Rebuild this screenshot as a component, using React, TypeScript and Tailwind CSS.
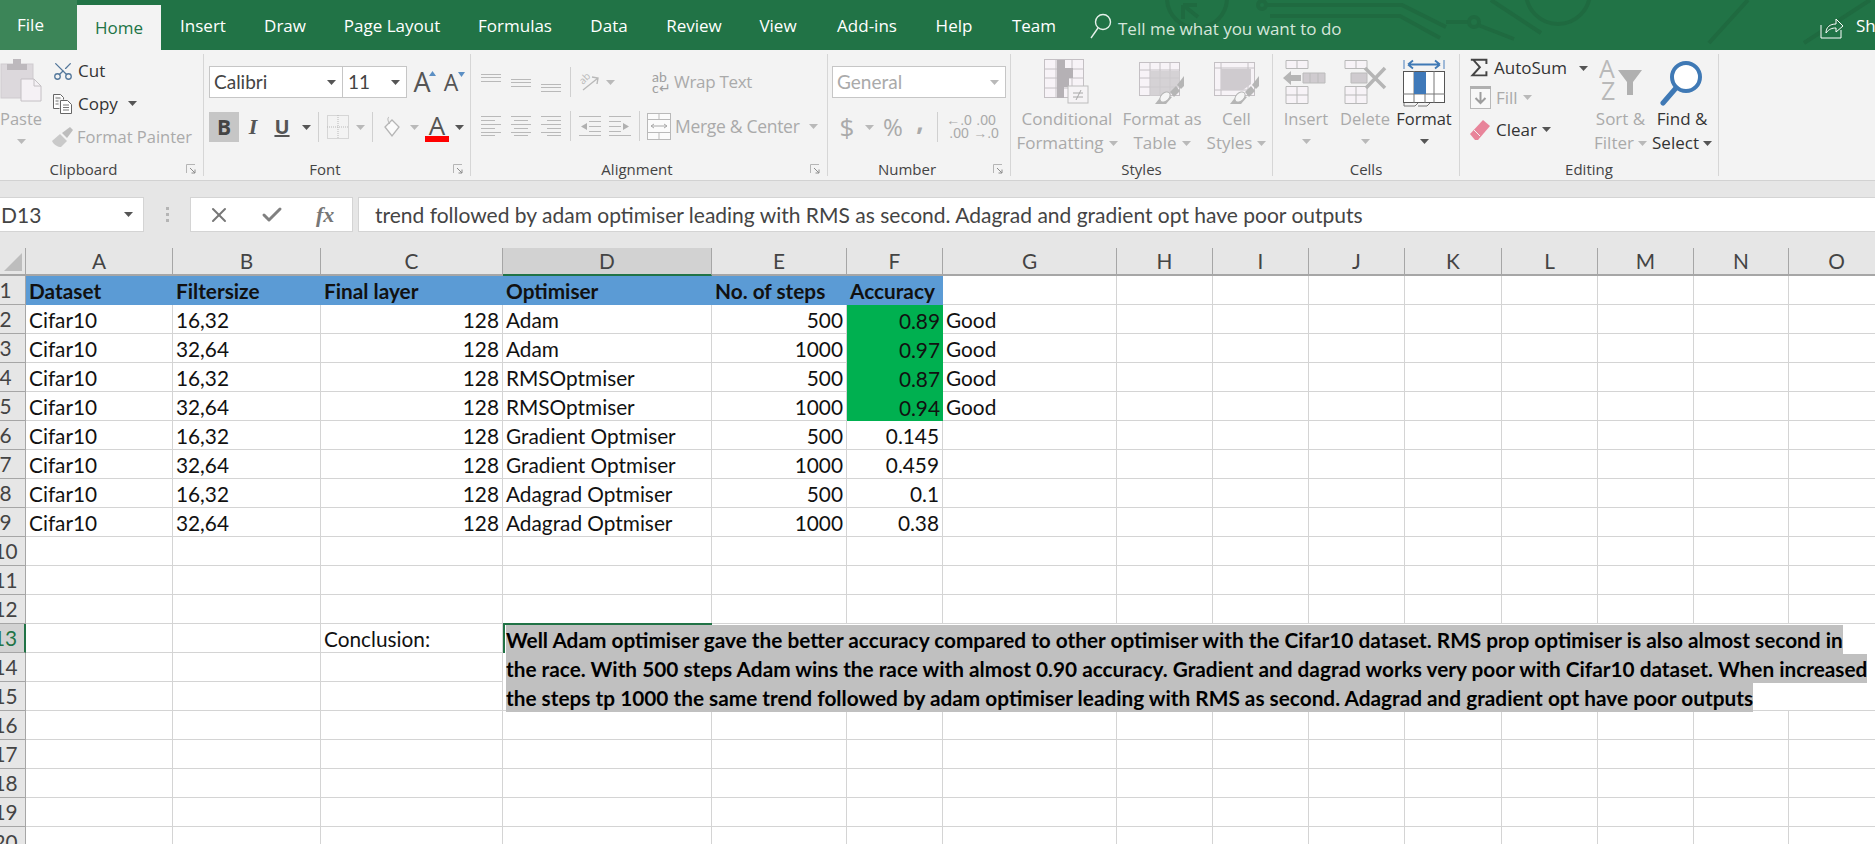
import { Check, Scissors, X } from "lucide-react";

const tabs = [
  { label: "Insert", w: "w-[84px]" },
  { label: "Draw", w: "w-[80px]" },
  { label: "Page Layout", w: "w-[134px]" },
  { label: "Formulas", w: "w-[112px]" },
  { label: "Data", w: "w-[76px]" },
  { label: "Review", w: "w-[94px]" },
  { label: "View", w: "w-[74px]" },
  { label: "Add-ins", w: "w-[104px]" },
  { label: "Help", w: "w-[70px]" },
  { label: "Team", w: "w-[90px]" },
];

const columns = ["A", "B", "C", "D", "E", "F", "G", "H", "I", "J", "K", "L", "M", "N", "O", "P"];

const rows = [
  ["Cifar10", "16,32", "128", "Adam", "500", "0.89", "Good"],
  ["Cifar10", "32,64", "128", "Adam", "1000", "0.97", "Good"],
  ["Cifar10", "16,32", "128", "RMSOptmiser", "500", "0.87", "Good"],
  ["Cifar10", "32,64", "128", "RMSOptmiser", "1000", "0.94", "Good"],
  ["Cifar10", "16,32", "128", "Gradient Optmiser", "500", "0.145", ""],
  ["Cifar10", "32,64", "128", "Gradient Optmiser", "1000", "0.459", ""],
  ["Cifar10", "16,32", "128", "Adagrad Optmiser", "500", "0.1", ""],
  ["Cifar10", "32,64", "128", "Adagrad Optmiser", "1000", "0.38", ""],
];

const headers = ["Dataset", "Filtersize", "Final layer", "Optimiser", "No. of steps", "Accuracy"];

const conclusion = [
  "Well Adam optimiser gave the better accuracy compared to other optimiser with the Cifar10 dataset. RMS prop optimiser is also almost second in",
  "the race. With 500 steps Adam wins the race with almost 0.90 accuracy. Gradient and dagrad works very poor with Cifar10 dataset. When increased",
  "the steps tp 1000 the same trend followed by adam optimiser leading with RMS as second. Adagrad and gradient opt have poor outputs",
];

const cellLine = "border-r border-b border-[#d4d4d4]";

function Caret({ dark = false }: { dark?: boolean }) {
  return (
    <svg width="9" height="5" viewBox="0 0 9 5" className="shrink-0">
      <path d="M0 0h9L4.5 5z" fill={dark ? "#555555" : "#b9b9b9"} />
    </svg>
  );
}

function Divider({ h = "h-[30px]" }: { h?: string }) {
  return <div className={`w-px shrink-0 bg-[#d0d0d0] ${h}`} />;
}

function Launcher() {
  return (
    <svg width="11" height="11" viewBox="0 0 11 11" className="absolute right-[6px] top-[6px]">
      <path d="M0.5 9V0.5H9" fill="none" stroke="#b5b5b5" />
      <path d="M4 4l5 5M9 5.5V9H5.5" fill="none" stroke="#8c8c8c" />
    </svg>
  );
}

function Group({
  w,
  label,
  labelPad = "",
  launcher = true,
  children,
}: {
  w: string;
  label: string;
  labelPad?: string;
  launcher?: boolean;
  children: React.ReactNode;
}) {
  return (
    <section className={`${w} h-[122px] shrink-0 border-r border-[#d6d6d6] flex flex-col`}>
      <div className="h-[104px] shrink-0">{children}</div>
      <div className={`relative h-[22px] text-center text-[15px] leading-[22px] text-[#444444] ${labelPad}`}>
        {label}
        {launcher ? <Launcher /> : null}
      </div>
    </section>
  );
}

function PasteIcon() {
  return (
    <svg width="43" height="44" viewBox="0 0 43 44">
      <rect x="2" y="6" width="32" height="34" fill="#dcd8dc" stroke="#cfcbcf" />
      <rect x="8" y="6" width="20" height="6" fill="#bdb9bd" />
      <rect x="14" y="1" width="8" height="6" fill="#bdb9bd" />
      <path d="M22 21h13l7 7v15H22z" fill="#f5f1f5" stroke="#c4c0c4" />
      <path d="M35 21v7h7" fill="none" stroke="#c4c0c4" />
    </svg>
  );
}

function CopyIcon() {
  return (
    <svg width="21" height="22" viewBox="0 0 21 22">
      <path d="M1.5 1.5h7l3 3v2M1.5 1.5v14h6" fill="#fff" stroke="#666" />
      <path d="M8.5 7.5h7l4 4v9h-11z" fill="#fff" stroke="#666" />
      <path d="M11 12h6M11 14.5h6M11 17h6M3.5 5h5M3.5 8h3M3.5 11h3" stroke="#777" />
    </svg>
  );
}

function PainterIcon() {
  return (
    <svg width="24" height="22" viewBox="0 0 24 22">
      <path d="M1 15l8-7 7 7-6 6C7 21 3 19 1 15z" fill="#c9c9c9" />
      <path d="M11 7l8-6 3 3-6 8z" fill="#bdbdbd" />
    </svg>
  );
}

function LinesIcon({ lines }: { lines: [number, number, number][] }) {
  return (
    <svg width="20" height="22" viewBox="0 0 20 22">
      {lines.map(([x1, x2, y]) => (
        <path key={`${x1}-${y}`} d={`M${x1} ${y}.5H${x2}`} stroke="#b9b9b9" />
      ))}
    </svg>
  );
}

const fullLines = (pts: number[]) => pts.map((y): [number, number, number] => [0, 20, y]);

function IndentIcon({ flip = false }: { flip?: boolean }) {
  return (
    <svg width="22" height="22" viewBox="0 0 22 22">
      <g transform={flip ? "translate(22 0) scale(-1 1)" : undefined}>
        <path d="M0 1.5h22M10 6.5h12M10 11.5h12M10 16.5h12M0 20.5h22" stroke="#b9b9b9" />
        <path d="M8 8v7l-6-3.5z" fill="#b0b0b0" />
      </g>
    </svg>
  );
}

function OrientationIcon() {
  return (
    <svg width="20" height="20" viewBox="0 0 20 20">
      <path d="M3 18L18 6M12 5l6 1-1 6" fill="none" stroke="#b9b9b9" strokeWidth="1.4" />
      <text x="0" y="10" fontSize="10" fill="#b9b9b9" transform="rotate(-45 5 8)">ab</text>
    </svg>
  );
}

function MergeIcon() {
  return (
    <svg width="24" height="27" viewBox="0 0 24 27">
      <rect x="0.5" y="0.5" width="23" height="26" fill="#fbfbfb" stroke="#b9b9b9" />
      <path d="M0 6.5h24M0 19.5h24M12 0v6M12 20v7" stroke="#b9b9b9" />
      <path d="M4 13h16M4 13l3-2M4 13l3 2M20 13l-3-2M20 13l-3 2" stroke="#a8a8a8" fill="none" />
    </svg>
  );
}

function BordersIcon() {
  return (
    <svg width="22" height="24" viewBox="0 0 22 24">
      <rect x="0.5" y="0.5" width="21" height="23" fill="none" stroke="#b9b9b9" strokeDasharray="1 1" />
      <path d="M11 0v24M0 12h22" stroke="#b9b9b9" strokeDasharray="1 1" />
    </svg>
  );
}

function FillIcon() {
  return (
    <svg width="19" height="22" viewBox="0 0 19 22">
      <path d="M3 11l7-7 7 7-7 9z" fill="#fbfbfb" stroke="#b5b5b5" strokeWidth="1.3" />
      <path d="M7 1c-2 1-1 5 1 7" fill="none" stroke="#b5b5b5" />
    </svg>
  );
}

function ConditionalIcon() {
  return (
    <svg width="46" height="46" viewBox="0 0 46 46">
      <rect x="0.5" y="0.5" width="39" height="38" fill="#f7f3f7" stroke="#c4c0c4" />
      <path d="M0 10h40M0 19h40M0 29h40M12 0v39M28 0v39" stroke="#c4c0c4" />
      <path d="M13 1h8v8h8v10h-4v9h-5v11h-7z" fill="#b5b1b5" />
      <rect x="24" y="27" width="20" height="17" fill="#f5f3f5" stroke="#bdbdbd" />
      <path d="M29 34h10M29 38h10M32 41l5-10" stroke="#a8a8a8" />
    </svg>
  );
}

function BrushDecor() {
  return (
    <>
      <path d="M16 45l8-10 9 3-6 7z" fill="#b5b5b5" />
      <ellipse cx="26" cy="38" rx="6" ry="4" fill="#f5f5f5" stroke="#b5b5b5" transform="rotate(-45 26 38)" />
      <path d="M31 33l6-6 4 5-6 6z" fill="#b5b5b5" />
      <path d="M38 26l7-9v10l-3 3z" fill="#b5b5b5" />
    </>
  );
}

function TableIcon() {
  return (
    <svg width="46" height="46" viewBox="0 0 46 46">
      <rect x="0.5" y="3.5" width="40" height="33" fill="#f7f3f7" stroke="#c4c0c4" />
      <path d="M0 11h41M0 19h41M0 28h41M11 4v32M21 4v32M31 4v32" stroke="#c4c0c4" />
      <path d="M11 12h30v13l-12 12H11z" fill="#cfcbcf" opacity="0.85" />
      <BrushDecor />
    </svg>
  );
}

function CellStyleIcon() {
  return (
    <svg width="46" height="46" viewBox="0 0 46 46">
      <rect x="0.5" y="3.5" width="40" height="33" fill="#f7f3f7" stroke="#c4c0c4" />
      <path d="M0 9h41M7 4v32M34 4v32M0 31h41" stroke="#c4c0c4" />
      <path d="M7 10h30v15l-8 6H7z" fill="#cfcbcf" />
      <BrushDecor />
    </svg>
  );
}

function GridBlocks() {
  return (
    <path d="M3 1.5h22v8H3zM14 1.5v8M3 27.5h22v17H3zM3 36h22M14 27v18" fill="#f7f3f7" stroke="#b9b9b9" />
  );
}

function InsertIcon() {
  return (
    <svg width="46" height="46" viewBox="0 0 46 46">
      <GridBlocks />
      <path d="M0 19l8-7v4h10v6H8v4z" fill="#b5b5b5" />
      <path d="M20 14h22v10H20z" fill="#cfcbcf" stroke="#bbbbbb" />
      <path d="M27 14v10M35 14v10" stroke="#bbbbbb" />
    </svg>
  );
}

function DeleteIcon() {
  return (
    <svg width="46" height="46" viewBox="0 0 46 46">
      <GridBlocks />
      <path d="M9 14h16v10H9z" fill="#cfcbcf" stroke="#bbbbbb" />
      <path d="M23 9l20 20M43 9L24 29" stroke="#b5b5b5" strokeWidth="3.5" />
    </svg>
  );
}

function FormatIcon() {
  return (
    <svg width="42" height="48" viewBox="0 0 42 48">
      <path d="M1 1v9M41 1v9" stroke="#4a7ebb" />
      <path d="M5 5.5h32M5 5.5l5-4M5 5.5l5 4M37 5.5l-5-4M37 5.5l-5 4" stroke="#3f79b5" strokeWidth="1.8" fill="none" />
      <rect x="0.5" y="12.5" width="41" height="31" fill="#fff" stroke="#555" />
      <path d="M11 12v32M22 12v32M31 12v32M0 35h42" stroke="#777" />
      <rect x="11" y="13" width="12" height="22" fill="#3f79b9" />
      <path d="M1 44v3h11l3-3M15 47h9l3-3" fill="none" stroke="#777" />
    </svg>
  );
}

function SigmaIcon() {
  return (
    <svg width="22" height="22" viewBox="0 0 22 22">
      <path d="M1 1h19v5M19 1H4l8 9-9 10h17v-5" fill="none" stroke="#444444" strokeWidth="2.4" />
    </svg>
  );
}

function FillDownIcon() {
  return (
    <svg width="21" height="23" viewBox="0 0 21 23">
      <rect x="0.5" y="0.5" width="20" height="22" fill="#f8f8f8" stroke="#b9b9b9" />
      <rect x="0" y="0" width="21" height="3" fill="#b0b0b0" />
      <path d="M10.5 6v11M5.5 12l5 5 5-5" fill="none" stroke="#9d9d9d" strokeWidth="2" />
    </svg>
  );
}

function EraserIcon() {
  return (
    <svg width="21" height="22" viewBox="0 0 21 22">
      <path d="M0 15L13 1l7 6L8 21h-3z" fill="#e8849a" />
      <path d="M4 11l6 6" stroke="#f3f3f3" />
    </svg>
  );
}

function SortIcon() {
  return (
    <svg width="44" height="44" viewBox="0 0 44 44">
      <text x="0" y="19" fontSize="25" fill="#b9b9b9">A</text>
      <text x="2" y="41" fontSize="25" fill="#b9b9b9">Z</text>
      <path d="M19 11h24L34 23v13h-6V23z" fill="#b0b0b0" />
    </svg>
  );
}

function FindIcon() {
  return (
    <svg width="44" height="48" viewBox="0 0 44 48">
      <circle cx="26" cy="18" r="14" fill="#fff" stroke="#3f79b5" strokeWidth="4" />
      <path d="M16 29L3 44" stroke="#3f79b5" strokeWidth="5" strokeLinecap="round" />
    </svg>
  );
}

function Deco() {
  return (
    <svg width="1875" height="50" viewBox="0 0 1875 50" className="absolute left-0 top-0">
      <g fill="none" stroke="#1f6a40" strokeWidth="4">
        <circle cx="1197" cy="-2" r="30" />
        <path d="M1183 5l15 12M1183 5v14M1183 5h14" />
        <circle cx="1262" cy="5" r="4" />
        <path d="M1266 5h136l44 22M1270 16h130l40 22M1446 22h24" />
        <circle cx="1474" cy="22" r="5" />
        <path d="M1478 25l36 14M1491 0l50 33M1748 0l-39 43M1870 0l-66 43" />
        <circle cx="1558" cy="-8" r="32" />
      </g>
    </svg>
  );
}

function TabBar() {
  return (
    <header className="relative h-[50px] bg-[#217346] text-white text-[17px] overflow-hidden whitespace-nowrap">
      <Deco />
      <div className="relative flex h-full items-end">
        <div className="w-[77px] shrink-0 h-[50px] bg-[#3c8558] pr-[16px] flex items-center justify-center">File</div>
        <div className="w-[84px] shrink-0 h-[45px] bg-[#f3f3f3] text-[#217346] flex items-center justify-center">Home</div>
        {tabs.map((t) => (
          <div key={t.label} className={`${t.w} shrink-0 h-[50px] flex items-center justify-center pt-[1px]`}>
            {t.label}
          </div>
        ))}
        <div className="h-[50px] shrink-0 flex items-center ml-[11px] text-[#d5e6db]">
          <svg width="22" height="26" viewBox="0 0 22 26" className="mt-[2px]">
            <circle cx="13" cy="9" r="7.5" fill="none" stroke="#e6f0ea" strokeWidth="1.4" />
            <path d="M8 15L1 25" stroke="#e6f0ea" strokeWidth="1.4" />
          </svg>
          <span className="ml-[6px] mt-[8px]">Tell me what you want to do</span>
        </div>
        <div className="h-[50px] w-[55px] shrink-0 ml-auto flex items-center">
          <svg width="24" height="24" viewBox="0 0 24 24" className="mt-[4px] shrink-0">
            <path d="M1 10v13h20v-8" fill="none" stroke="#fff" />
            <path d="M6 18c0-6 4-9 10-9V4l7 7-7 6v-4c-4 0-7 1-10 5z" fill="none" stroke="#fff" />
          </svg>
          <span className="ml-[12px] mt-[2px]">Share</span>
        </div>
      </div>
    </header>
  );
}

function Ribbon() {
  const off = "text-[#aaaaaa]";
  return (
    <div className="h-[131px] bg-[#f3f3f3] border-b border-[#d2d2d2] pt-[4px] flex text-[16.5px] leading-[24px] text-[#333333] font-['Open_Sans',sans-serif] whitespace-nowrap overflow-hidden">
      <Group w="w-[204px]" label="Clipboard" labelPad="pr-[36px]">
        <div className="flex">
          <div className={`w-[42px] flex flex-col items-center ${off}`}>
            <div className="mt-[4px] -ml-[1px]"><PasteIcon /></div>
            <span className="mt-[5px]">Paste</span>
            <div className="mt-[8px]"><Caret /></div>
          </div>
          <div className="ml-[10px] flex flex-col">
            <div className="h-[33px] flex items-center gap-[4px] text-[17px]">
              <Scissors size={22} strokeWidth={1.4} className="text-[#53779b] -rotate-90" />
              <span>Cut</span>
            </div>
            <div className="h-[33px] flex items-center gap-[5px] text-[17px]">
              <CopyIcon />
              <span>Copy</span>
              <span className="ml-[5px]"><Caret dark /></span>
            </div>
            <div className={`h-[33px] flex items-center -ml-[1px] gap-[2px] ${off}`}>
              <PainterIcon />
              <span>Format Painter</span>
            </div>
          </div>
        </div>
      </Group>

      <Group w="w-[267px]" label="Font" labelPad="pr-[24px]">
        <div className="pl-[5px]">
          <div className="flex mt-[12px] h-[32px] items-center">
            <div className="w-[134px] h-[32px] bg-white border border-[#c6c6c6] flex items-center justify-between pl-[4px] pr-[6px] font-['Lato',sans-serif] text-[#444444] text-[19px]">
              Calibri <Caret dark />
            </div>
            <div className="w-[64px] h-[32px] bg-white border border-l-0 border-[#c6c6c6] flex items-center justify-between pl-[5px] pr-[6px] font-['Lato',sans-serif] text-[#444444] text-[19px]">
              11 <Caret dark />
            </div>
            <div className="relative w-[30px] text-center text-[27px] text-[#555555]">
              A
              <span className="absolute right-[1px] top-[1px]"><svg width="7" height="5" viewBox="0 0 7 5"><path d="M0 5h7L3.5 0z" fill="#5b8fc4" /></svg></span>
            </div>
            <div className="relative w-[28px] text-center text-[23px] text-[#555555]">
              A
              <span className="absolute right-[0px] top-[2px]"><svg width="7" height="5" viewBox="0 0 7 5"><path d="M0 0h7L3.5 5z" fill="#5b8fc4" /></svg></span>
            </div>
          </div>
          <div className="flex mt-[14px] h-[30px] items-center">
            <div className="w-[30px] h-[30px] bg-[#c6c6c6] flex items-center justify-center font-bold text-[21px] text-[#444444]">B</div>
            <div className="w-[26px] ml-[1px] text-center italic font-bold text-[22px] text-[#555555] font-['Liberation_Serif',serif]">I</div>
            <div className="w-[32px] text-center underline font-bold text-[20px] text-[#555555]">U</div>
            <div className="w-[16px] flex justify-center"><Caret dark /></div>
            <div className="w-[4px]" />
            <Divider />
            <div className="w-[37px] flex justify-center"><BordersIcon /></div>
            <div className="w-[9px] flex justify-center"><Caret /></div>
            <div className="w-[7px]" />
            <Divider />
            <div className="w-[37px] flex justify-center"><FillIcon /></div>
            <div className="w-[9px] flex justify-center"><Caret /></div>
            <div className="w-[24px] ml-[6px] text-center text-[26px] text-[#555555] leading-[24px]">
              A
              <div className="w-[24px] h-[6px] bg-[#ff0000] -mt-[1px]" />
            </div>
            <div className="ml-[6px]"><Caret dark /></div>
          </div>
        </div>
      </Group>

      <Group w="w-[357px]" label="Alignment" labelPad="pr-[24px]">
        <div className="pl-[10px]">
          <div className={`flex h-[32px] mt-[12px] items-center ${off}`}>
            <div className="w-[30px]"><LinesIcon lines={fullLines([3, 6, 10])} /></div>
            <div className="w-[30px]"><LinesIcon lines={fullLines([8, 11, 15])} /></div>
            <div className="w-[29px]"><LinesIcon lines={fullLines([13, 16, 20])} /></div>
            <Divider />
            <div className="ml-[9px] w-[26px]"><OrientationIcon /></div>
            <Caret />
            <div className="ml-[37px] w-[22px] text-[14px] leading-[11px] text-[#a0a0a0] font-['Lato',sans-serif]">
              ab
              <br />
              c↵
            </div>
            <span className="text-[17px] tracking-[-0.3px]">Wrap Text</span>
          </div>
          <div className={`flex h-[32px] mt-[12px] items-center ${off}`}>
            <div className="w-[30px]"><LinesIcon lines={[[0, 20, 1], [0, 14, 5], [0, 20, 9], [0, 14, 13], [0, 20, 17], [0, 14, 20]]} /></div>
            <div className="w-[30px]"><LinesIcon lines={[[0, 20, 1], [3, 17, 5], [0, 20, 9], [3, 17, 13], [0, 20, 17], [3, 17, 20]]} /></div>
            <div className="w-[29px]"><LinesIcon lines={[[0, 20, 1], [6, 20, 5], [0, 20, 9], [6, 20, 13], [0, 20, 17], [6, 20, 20]]} /></div>
            <Divider />
            <div className="ml-[8px] w-[30px]"><IndentIcon /></div>
            <div className="w-[30px]"><IndentIcon flip /></div>
            <Divider />
            <div className="ml-[7px] w-[28px]"><MergeIcon /></div>
            <span className="text-[17.5px] tracking-[-0.3px]">Merge &amp; Center</span>
            <span className="ml-[9px]"><Caret /></span>
          </div>
        </div>
      </Group>

      <Group w="w-[183px]" label="Number" labelPad="pr-[24px]">
        <div className="pl-[4px]">
          <div className="mt-[12px] w-[174px] h-[32px] bg-white border border-[#c6c6c6] flex items-center justify-between pl-[4px] pr-[6px] font-['Lato',sans-serif] text-[#aaaaaa] text-[19px]">
            General <Caret />
          </div>
          <div className={`flex mt-[13px] h-[32px] items-center ${off}`}>
            <div className="w-[30px] text-center text-[26px]">$</div>
            <div className="w-[8px] ml-[3px]"><Caret /></div>
            <div className="ml-[6px] w-[28px] text-center text-[24px]">%</div>
            <div className="w-[26px] -mt-[12px] text-center font-bold text-[26px] leading-[20px]">,</div>
            <div className="w-[4px]" />
            <Divider />
            <div className="ml-[8px] w-[26px] text-[14px] leading-[13px] font-['Liberation_Sans',sans-serif] text-center">
              ←.0
              <br />
              .00
            </div>
            <div className="w-[28px] text-[14px] leading-[13px] font-['Liberation_Sans',sans-serif] text-center">
              .00
              <br />
              →.0
            </div>
          </div>
        </div>
      </Group>

      <Group w="w-[262px]" label="Styles" launcher={false}>
        <div className={`flex pt-[5px] ${off} text-[17px]`}>
          <div className="w-[112px] flex flex-col items-center">
            <ConditionalIcon />
            <span className="mt-[2px]">Conditional</span>
            <span className="flex items-center gap-[5px]">Formatting <Caret /></span>
          </div>
          <div className="w-[78px] flex flex-col items-center">
            <TableIcon />
            <span className="mt-[2px]">Format as</span>
            <span className="flex items-center gap-[5px]">Table <Caret /></span>
          </div>
          <div className="w-[71px] flex flex-col items-center">
            <CellStyleIcon />
            <span className="mt-[2px]">Cell</span>
            <span className="flex items-center gap-[5px]">Styles <Caret /></span>
          </div>
        </div>
      </Group>

      <Group w="w-[187px]" label="Cells" launcher={false}>
        <div className="flex pt-[5px] pl-[4px]">
          <div className={`w-[58px] flex flex-col items-center ${off}`}>
            <InsertIcon />
            <span className="mt-[2px]">Insert</span>
            <div className="mt-[8px]"><Caret /></div>
          </div>
          <div className={`w-[60px] flex flex-col items-center ${off}`}>
            <DeleteIcon />
            <span className="mt-[2px]">Delete</span>
            <div className="mt-[8px]"><Caret /></div>
          </div>
          <div className="w-[58px] flex flex-col items-center">
            <FormatIcon />
            <span>Format</span>
            <div className="mt-[8px]"><Caret dark /></div>
          </div>
        </div>
      </Group>

      <Group w="w-[259px]" label="Editing" launcher={false}>
        <div className="flex pl-[10px] text-[17px]">
          <div className="w-[118px]">
            <div className="h-[28px] flex items-center gap-[6px]">
              <SigmaIcon />
              <span>AutoSum</span>
              <span className="ml-[6px]"><Caret dark /></span>
            </div>
            <div className={`h-[31px] flex items-center gap-[5px] ${off}`}>
              <FillDownIcon />
              <span>Fill</span>
              <Caret />
            </div>
            <div className="h-[33px] flex items-center gap-[5px]">
              <EraserIcon />
              <span>Clear</span>
              <Caret dark />
            </div>
          </div>
          <div className={`w-[65px] flex flex-col items-center pt-[5px] ${off}`}>
            <SortIcon />
            <span className="mt-[4px]">Sort &amp;</span>
            <span className="flex items-center gap-[4px]">Filter <Caret /></span>
          </div>
          <div className="w-[58px] flex flex-col items-center pt-[5px]">
            <FindIcon />
            <span>Find &amp;</span>
            <span className="flex items-center gap-[4px]">Select <Caret dark /></span>
          </div>
        </div>
      </Group>
    </div>
  );
}

function FormulaBar() {
  return (
    <div className="h-[67px] bg-[#e6e6e6] pt-[16px] flex items-start text-[21px] text-[#444444]">
      <div className="w-[144px] h-[35px] bg-white border border-l-0 border-[#d4d4d4] flex items-center justify-between pl-px pr-[10px]">
        D13 <Caret dark />
      </div>
      <div className="w-[46px] h-[35px] flex flex-col items-center justify-center gap-[3px]">
        <span className="w-[3px] h-[3px] bg-[#b5b5b5]" />
        <span className="w-[3px] h-[3px] bg-[#b5b5b5]" />
        <span className="w-[3px] h-[3px] bg-[#b5b5b5]" />
      </div>
      <div className="w-[163px] h-[35px] bg-white border border-[#d4d4d4] flex items-center">
        <X size={24} strokeWidth={2} className="ml-[16px] text-[#777777]" />
        <Check size={24} strokeWidth={3} className="ml-[29px] text-[#808080]" />
        <span className="ml-[32px] italic font-bold text-[22px] text-[#777777] font-['Liberation_Serif',serif]">fx</span>
      </div>
      <div className="ml-[5px] flex-1 h-[35px] bg-white border border-r-0 border-[#d4d4d4] flex items-center pl-[16px] whitespace-nowrap">
        trend followed by adam optimiser leading with RMS as second. Adagrad and gradient opt have poor outputs
      </div>
    </div>
  );
}

function RowHead({ n, selected = false, last = false }: { n: number; selected?: boolean; last?: boolean }) {
  return (
    <div
      className={`flex items-center justify-center border-[#a6a6a6] ${last ? "" : "border-b"} ${
        selected ? "bg-[#d2d2d2] text-[#217346] border-r-2 border-r-[#217346]" : "bg-[#e6e6e6] text-[#444444] border-r"
      }`}
    >
      <span className="w-[12px] -ml-[14px] flex justify-center">{n}</span>
    </div>
  );
}

function Sheet() {
  const align = (c: number) => (c === 2 || c === 4 || c === 5 ? "justify-end pr-[3px]" : "pl-[3px]");
  return (
    <div className="grid grid-cols-[26px_147px_148px_182px_209px_135px_96px_174px_96px_96px_96px_97px_96px_96px_95px_96px_96px] grid-rows-[28px] auto-rows-[29px] text-[20.8px] text-[#111111] whitespace-nowrap">
      <div className="bg-[#e6e6e6] border-r border-b-2 border-[#a6a6a6] flex items-end justify-end p-[3px]">
        <div className="w-[18px] h-[18px] bg-[#bdbdbd] [clip-path:polygon(100%_0,100%_100%,0_100%)]" />
      </div>
      {columns.map((c, i) => (
        <div
          key={c}
          className={`flex items-center justify-center border-b-2 border-r text-[#444444] ${
            i === 3 ? "bg-[#d2d2d2] border-b-[#217346] border-r-[#a6a6a6] text-[#217346]" : "bg-[#e6e6e6] border-[#a6a6a6]"
          }`}
        >
          {c}
        </div>
      ))}

      <RowHead n={1} />
      {headers.map((h) => (
        <div key={h} className="bg-[#5b9bd5] font-bold flex items-center pl-[3px]">
          {h}
        </div>
      ))}
      {columns.slice(6).map((c) => (
        <div key={c} className={cellLine} />
      ))}

      {rows.map((row, r) => (
        <div key={r} className="contents">
          <RowHead n={r + 2} />
          {row.map((v, c) => (
            <div
              key={c}
              className={`flex items-center pt-[2px] ${align(c)} ${c === 5 && r < 4 ? "bg-[#00b050]" : cellLine}`}
            >
              {v}
            </div>
          ))}
          {columns.slice(7).map((c) => (
            <div key={c} className={cellLine} />
          ))}
        </div>
      ))}

      {Array.from({ length: 10 }, (_, i) => i + 10).map((n) => {
        const textLine = n >= 13 && n <= 15 ? conclusion[n - 13] : null;
        const selected = n === 13;
        return (
          <div key={n} className="contents">
            <RowHead n={n} selected={selected} />
            <div className={cellLine} />
            <div className={cellLine} />
            <div className={`${cellLine} flex items-center pt-[2px] ${selected ? "pl-[3px]" : ""}`}>{selected ? "Conclusion:" : ""}</div>
            {textLine ? (
              <div className={`relative col-[5/-1] pl-[3px] ${n === 15 ? "border-b border-[#d4d4d4]" : ""}`}>
                {selected ? (
                  <>
                    <div className="absolute left-0 top-[-1px] w-[209px] h-[2px] bg-[#217346]" />
                    <div className="absolute left-0 top-0 w-[2px] h-[29px] bg-[#217346]" />
                  </>
                ) : null}
                <span className="inline-block h-[29px] leading-[29px] bg-[#c0c0c0] font-bold text-black">{textLine}</span>
              </div>
            ) : (
              columns.slice(3).map((c) => <div key={c} className={cellLine} />)
            )}
          </div>
        );
      })}
      <RowHead n={20} last />
      {columns.map((c) => (
        <div key={c} className="border-r border-[#d4d4d4]" />
      ))}
    </div>
  );
}

export default function App() {
  return (
    <div className="w-[1875px] h-[844px] overflow-hidden bg-white font-['Lato',sans-serif]">
      <div className="font-['Open_Sans',sans-serif]">
        <TabBar />
        <Ribbon />
      </div>
      <FormulaBar />
      <Sheet />
    </div>
  );
}
